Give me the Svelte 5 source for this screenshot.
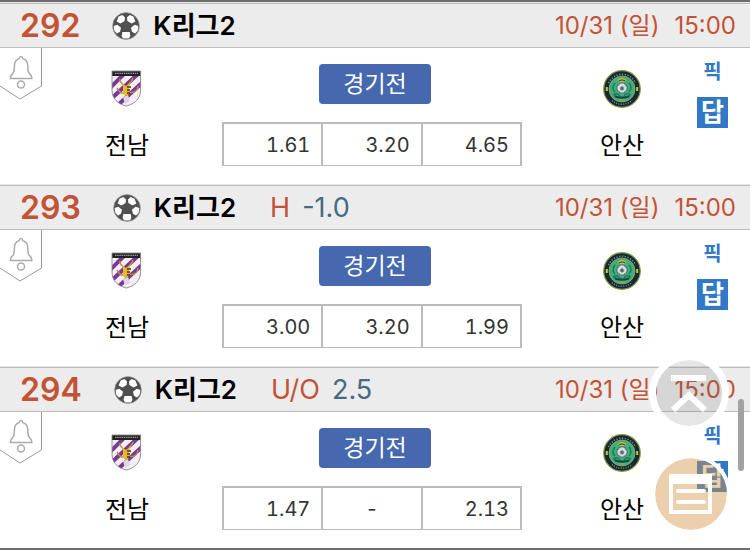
<script lang="ts">
  interface Match {
    no: number;
    league: string;
    type?: string;
    line?: string;
    date: string;
    time: string;
    home: string;
    away: string;
    odds: string[];
  }

  const base = { league: 'K리그2', date: '10/31 (일)', time: '15:00', home: '전남', away: '안산' };

  let matches: Match[] = [
    { ...base, no: 292, odds: ['1.61', '3.20', '4.65'] },
    { ...base, no: 293, type: 'H', line: '-1.0', odds: ['3.00', '3.20', '1.99'] },
    { ...base, no: 294, type: 'U/O', line: '2.5', odds: ['1.47', '-', '2.13'] }
  ];
</script>

<main class="matches">
  {#each matches as match}
    <section class="match">
      <header class="match-header">
        <span class="no">{match.no}</span>
        <svg class="ball" viewBox="0 0 28 28" aria-hidden="true">
          <circle cx="14" cy="14" r="13.2" fill="#505050" />
          <g fill="#fff">
            <path d="M6.6 4.6 L10.4 3 L13 5.4 L12.6 9 L8.4 11.4 L4.6 9.6z" />
            <path d="M21.4 4.6 L17.6 3 L15 5.4 L15.4 9 L19.6 11.4 L23.4 9.6z" />
            <path d="M1.6 14 L5.4 12.8 L9 15.8 L8 19.8 L5 21.6 L2.4 19z" />
            <path d="M26.4 14 L22.6 12.8 L19 15.8 L20 19.8 L23 21.6 L25.6 19z" />
            <path d="M10.4 20 H17.6 L18.4 24 L16.8 26.6 H11.2 L9.6 24z" />
          </g>
          <circle cx="14" cy="14" r="13.4" fill="none" stroke="#888" stroke-width="0.8" />
        </svg>
        <h2>{match.league}</h2>
        {#if match.type}
          <span class="type">{match.type}</span>
          <span class="line">{match.line}</span>
        {/if}
        <span class="date">{match.date}</span>
        <time>{match.time}</time>
      </header>

      <div class="match-body">
        <button class="alarm" aria-label="알림">
          <svg viewBox="0 0 42 52" fill="none">
            <path d="M41.5 0 V38 L20 51 L0 38" stroke="#999" />
            <path
              d="M21 8.5 C19.8 8.5 19.4 9.5 19.2 10.6 C15.8 11.6 14.4 14.4 14.4 18 C14.4 23.6 13.6 25 11.2 27.4 C10.4 28.6 10.4 29.4 10.4 30.6 H31.8 C31.8 29.4 31.8 28.6 31 27.4 C28.6 25 27.8 23.6 27.8 18 C27.8 14.4 26.2 11.6 22.8 10.6 C22.6 9.5 22.2 8.5 21 8.5z"
              stroke="#aaa"
              stroke-width="1.5"
            />
            <circle cx="21" cy="36.5" r="3.5" stroke="#aaa" stroke-width="1.5" />
          </svg>
        </button>

        <div class="team">
          <svg class="crest" viewBox="0 0 38 38" aria-hidden="true">
            <clipPath id="shield-{match.no}">
              <path d="M4 1 H32.6 V20 C32.6 29 26.5 34 18.3 36 C10 34 4 29 4 20z" />
            </clipPath>
            <g clip-path="url(#shield-{match.no})">
              <rect width="38" height="38" fill="#f1eff3" />
              <g stroke="#7b359b" stroke-width="4">
                <path d="M0 20 L18 2" />
                <path d="M3 29 L31 3" />
                <path d="M10 35 L37 10" />
              </g>
              <path d="M15 27 L20 25 L22 31 L17 34z" fill="#ddd9e2" />
              <rect width="38" height="6" fill="#222" />
              <path d="M7 3.4 H30" stroke="#999" stroke-width="1.2" stroke-dasharray="1.5 0.7" />
            </g>
            <g fill="none" stroke="#b8913a" stroke-width="1.5">
              <path d="M17 17 C15 13 11 13 12 9" />
              <path d="M17 22 C13 25 11 21 9 18" />
              <path d="M20 17 C20 13 24 13 25 8" />
              <path d="M21 22 C26 24 30 20 30 16" />
            </g>
            <path d="M14 13 L18 16 L23 12 L21 17 V24 L18 26 L15 24 V17z" fill="#e8b923" />
            <path d="M19 17 H23 M19 20 H22 M19 23 H22" stroke="#4b3320" stroke-width="1.4" />
            <path
              d="M4 1 H32.6 V20 C32.6 29 26.5 34 18.3 36 C10 34 4 29 4 20z"
              fill="none"
              stroke="#888"
              stroke-width="0.9"
            />
          </svg>
          <span>{match.home}</span>
        </div>

        <div class="center">
          <button class="status">경기전</button>
          <table>
            <tbody>
              <tr>
                {#each match.odds as odd}
                  <td class:empty={odd === '-'}>{odd}</td>
                {/each}
              </tr>
            </tbody>
          </table>
        </div>

        <div class="team">
          <svg class="crest" viewBox="0 0 38 38" aria-hidden="true">
            <circle cx="19" cy="19" r="18.3" fill="#14283a" stroke="#8b9b3c" stroke-width="1.2" />
            <path
              d="M5.5 13 A14.8 14.8 0 0 1 32.5 13"
              fill="none"
              stroke="#71838a"
              stroke-width="1.6"
              stroke-dasharray="1.4 1.4"
            />
            <path
              d="M9 30.5 A15 15 0 0 0 29 30.5"
              fill="none"
              stroke="#71838a"
              stroke-width="1.4"
              stroke-dasharray="1.2 1.2"
            />
            <circle cx="19" cy="19" r="13" fill="#3fae7a" stroke="#9cae42" stroke-width="0.8" />
            <path d="M3.8 17 V21 M34.2 17 V21" stroke="#c9c83e" stroke-width="2" />
            <path d="M14.5 10 Q19 6 23.5 10 L21 12.5 H17z" fill="#c4bd4b" />
            <path d="M16 11 Q19 9 22 11" stroke="#1c4845" stroke-width="1.2" fill="none" />
            <path
              d="M12 13 Q8 18 12 22 M26 13 Q30 18 26 22 M10 25 Q14 22 17 26 M28 25 Q24 22 21 26"
              stroke="#23785f"
              stroke-width="1.5"
              fill="none"
            />
            <circle cx="19" cy="18" r="5.2" fill="#d5dddb" stroke="#476a70" />
            <path
              d="M19 16.4 L20.8 17.8 L20.2 20 H17.8 L17.2 17.8z M15 16 l1.6 -1.6 M23 16 l-1.6 -1.6 M15.6 21 l1.4 1 M22.4 21 l-1.4 1"
              fill="#4c6573"
              stroke="#6f8790"
              stroke-width="0.8"
            />
            <path d="M11 25 Q19 28 27 25 L26 27.6 Q19 30 12 27.6z" fill="#1b454d" />
            <path d="M16 30 H22" stroke="#a8ae43" />
          </svg>
          <span>{match.away}</span>
        </div>

        <div class="picks">
          <a href="#pick" class="pick">픽</a>
          <a href="#answer" class="answer">답</a>
        </div>
      </div>
    </section>
  {/each}
</main>

<button class="float to-top" aria-label="맨 위로">
  <svg viewBox="0 0 66 66" fill="none" stroke="#fff" stroke-width="6">
    <path d="M15 18 H50" />
    <path d="M17 50 L33 35 L49 50" />
  </svg>
</button>
<button class="float list" aria-label="목록">
  <svg viewBox="0 0 72 72" fill="none" stroke="#fff" stroke-width="4">
    <path d="M16 18 H55 V54 H16z" />
    <path d="M14 21 H57" stroke-width="10" />
    <path d="M23 33 H49 M23 44 H49" stroke-linecap="round" />
  </svg>
</button>
<div class="scrollbar"></div>

<style>
  :global(body) {
    background: #fff;
    color: #000;
    font-family: Inter, 'Noto Sans CJK KR', sans-serif;
  }

  button {
    padding: 0;
    border: 0;
    background: none;
    font-family: inherit;
    cursor: pointer;
  }

  svg {
    display: block;
  }

  .matches {
    border-top: 2px solid #6d6d6d;
    border-bottom: 2px solid #6d6d6d;
  }

  .match {
    border-top: 1px solid #e8e8e8;
  }

  .match-header {
    display: flex;
    align-items: center;
    box-sizing: border-box;
    height: 45px;
    padding: 0 14px 0 20px;
    border-top: 1px solid #bbb;
    border-bottom: 1px solid #bbb;
    background: #ececec;
    color: #c35335;
    font-size: 24px;
    line-height: 32px;
    white-space: nowrap;
  }

  .no {
    font-size: 32px;
    font-weight: 600;
  }

  .ball {
    width: 28px;
    height: 28px;
    margin: 0 13px 0 32px;
  }

  h2 {
    margin: 0;
    color: #000;
    font-size: 26px;
    font-weight: 600;
  }

  .type {
    margin-left: 34px;
    font-size: 27px;
  }

  .line {
    margin-left: 12px;
    color: #456b80;
    font-size: 27px;
  }

  .date {
    margin-left: auto;
  }

  time {
    margin-left: 15px;
  }

  .match-body {
    display: grid;
    grid-template-columns: 42px 17fr 335px 15fr 53px;
    height: 136px;
  }

  .alarm {
    align-self: start;
  }

  .alarm svg {
    width: 42px;
    height: 52px;
  }

  .team {
    display: flex;
    flex-direction: column;
    align-items: center;
    gap: 22px;
    padding-top: 22px;
    font-size: 24px;
    line-height: 32px;
  }

  .crest {
    width: 38px;
    height: 38px;
  }

  .center {
    display: flex;
    flex-direction: column;
    align-items: center;
    gap: 18px;
    padding: 16px 25px 0 10px;
  }

  .status {
    width: 112px;
    height: 40px;
    margin-left: 6px;
    border-radius: 4px;
    background: #4568af;
    color: #fff;
    font-size: 23px;
    line-height: 32px;
  }

  table {
    width: 100%;
    height: 44px;
    table-layout: fixed;
    border-collapse: collapse;
  }

  td {
    padding: 0 11px 0 0;
    border: 2px solid #bbb;
    border-bottom-width: 1px;
    color: #333;
    font-size: 20px;
    font-variant-numeric: tabular-nums;
    text-align: right;
  }

  .empty {
    padding: 0;
    text-align: center;
  }

  .picks {
    display: flex;
    flex-direction: column;
    align-items: center;
    gap: 9px;
    width: 31px;
    padding-top: 8px;
    text-align: center;
  }

  .picks a {
    text-decoration: none;
  }

  .pick {
    color: #3178c6;
    font-size: 20px;
    font-weight: 600;
    line-height: 32px;
  }

  .answer {
    width: 31px;
    background: #3178c6;
    color: #fff;
    font-size: 25px;
    font-weight: 700;
    line-height: 31px;
  }

  .float {
    position: fixed;
    border-radius: 50%;
  }

  .to-top {
    right: 21px;
    bottom: 117px;
    border: 7px solid #fff;
    background: rgba(100, 100, 100, 0.16);
    background-clip: padding-box;
  }

  .to-top svg {
    width: 66px;
    height: 66px;
  }

  .list {
    right: 19px;
    bottom: 16px;
    border: 4px solid #fff;
    background: rgba(212, 148, 71, 0.44);
    background-clip: padding-box;
  }

  .list svg {
    width: 72px;
    height: 72px;
  }

  .scrollbar {
    position: fixed;
    right: 6px;
    bottom: 79px;
    width: 6px;
    height: 72px;
    border-radius: 3px;
    background: #a2a2a2;
  }
</style>
